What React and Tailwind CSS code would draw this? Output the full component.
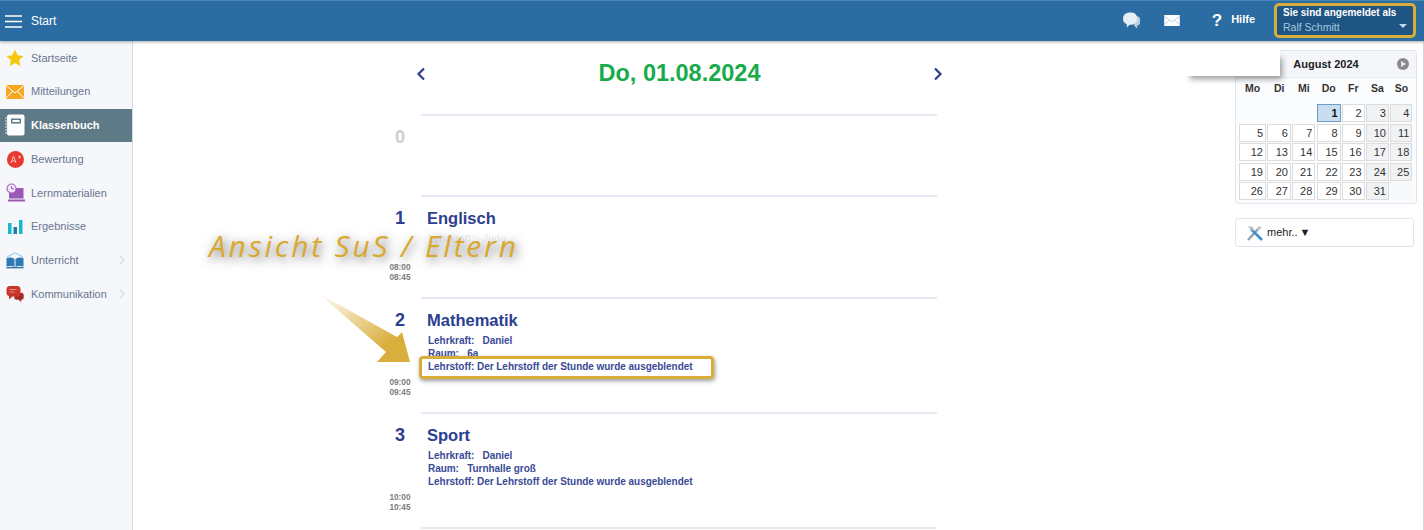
const navy = "text-[#2c3e8f]";

const StarIcon = () => (
    <svg width="18" height="18" viewBox="0 0 18 18"><polygon points="9,0.5 11.6,6.2 17.6,6.9 13.1,11 14.4,17.2 9,14 3.6,17.2 4.9,11 0.4,6.9 6.4,6.2" fill="#f6c70f" /></svg>
);
const MailIcon = () => (
    <svg width="18" height="14" viewBox="0 0 18 14"><rect width="18" height="14" fill="#f5a623" /><path d="M0 .5 9 8l9-7.5M0 13.5 6.5 6M18 13.5 11.5 6" fill="none" stroke="#fff" strokeWidth="1" /></svg>
);
const BookIcon = () => (
    <svg width="20" height="22" viewBox="0 0 20 22"><rect x="2" y="0.5" width="17.5" height="21" rx="2" fill="#fff" /><rect x="6" y="4.5" width="10" height="5" fill="#5f7a87" /><rect x="7.5" y="6" width="7" height="2" fill="#fff" /><path d="M0 4h3M0 7h3M0 10h3M0 13h3M0 16h3M0 19h3" stroke="#dfe5e8" strokeWidth="1" /></svg>
);
const GradeIcon = () => (
    <svg width="17" height="17" viewBox="0 0 17 17"><circle cx="8.5" cy="8.5" r="8.5" fill="#e8392f" /><path d="M4 12 6.5 5 9 12M5 10h3" fill="none" stroke="#f7c5c0" strokeWidth="1" /><path d="M11 6h3M12.5 4.500v3" stroke="#f7c5c0" strokeWidth="1" /></svg>
);
const LaptopIcon = () => (
    <svg width="19" height="19" viewBox="0 0 19 19"><rect x="3" y="5" width="14.500" height="10.500" fill="#9b59b6" /><path d="M2 16.500h17V18.500H2z" fill="#9b59b6" /><circle cx="5.500" cy="5.500" r="4.500" fill="#f3e8f8" stroke="#a56cc1" strokeWidth="1.200" /><path d="M5.500 3v2.800H8" fill="none" stroke="#9b59b6" strokeWidth="1" /></svg>
);
const BarsIcon = () => (
    <svg width="15" height="14" viewBox="0 0 15 14"><rect x="0" y="3" width="3.500" height="11" fill="#17b8c8" /><rect x="5.500" y="7" width="3.500" height="7" fill="#1f7fa6" /><rect x="11" y="0" width="3.500" height="14" fill="#17b8c8" /></svg>
);
const LessonIcon = () => (
    <svg width="18" height="17" viewBox="0 0 18 17"><path d="M1 5 9 .8 17 5" fill="none" stroke="#8fc0e3" strokeWidth="1" /><path d="M.5 6C4 5 7 5.500 8.500 7v8C7 14 4 13.500.5 14.500zM17.500 6C14 5 11 5.500 9.500 7v8c1.500-1 4.500-1.500 8-.5z" fill="#2c7bb5" /><path d="M.5 15.700h17" stroke="#1d5f8f" strokeWidth="1.200" /></svg>
);
const TalkIcon = () => (
    <svg width="18" height="17" viewBox="0 0 18 17"><path d="M8 6.500h7.500a2.500 2.500 0 0 1 2.500 2.500v2.500A2.500 2.500 0 0 1 15.500 14v2.800L12.500 14H10.500A2.500 2.500 0 0 1 8 11.500z" fill="#a32c22" stroke="#fff" strokeWidth="0.600" /><path d="M4 0h7a3.500 3.500 0 0 1 3.500 3.500v3.500A3.500 3.500 0 0 1 11 10.500H6.500L3 13.500v-3.200A3.500 3.500 0 0 1 .5 7V3.500A3.500 3.500 0 0 1 4 0z" fill="#c9352b" /><path d="M3.500 3.500h7M3.500 6h5" stroke="#e88f88" strokeWidth="1" /></svg>
);
const Chevron = ({ open }) => (
    <svg width="6" height="10" viewBox="0 0 6 10" className={open ? "" : "invisible"}><path d="M1 1l4 4-4 4" fill="none" stroke="#d5d9de" strokeWidth="1.200" /></svg>
);

const navItems = [
    { label: "Startseite", icon: <StarIcon /> },
    { label: "Mitteilungen", icon: <MailIcon /> },
    { label: "Klassenbuch", icon: <BookIcon />, active: true },
    { label: "Bewertung", icon: <GradeIcon /> },
    { label: "Lernmaterialien", icon: <LaptopIcon /> },
    { label: "Ergebnisse", icon: <BarsIcon /> },
    { label: "Unterricht", icon: <LessonIcon />, more: true },
    { label: "Kommunikation", icon: <TalkIcon />, more: true },
];

const hidden = "Der Lehrstoff der Stunde wurde ausgeblendet";
const lessons = [
    { nr: "0", h: "h-[81px]", muted: true },
    { nr: "1", h: "h-[102px]", title: "Englisch", from: "08:00", to: "08:45", faded: true },
    { nr: "2", h: "h-[115px]", title: "Mathematik", from: "09:00", to: "09:45", room: "6a", marked: true },
    { nr: "3", h: "h-[115px]", title: "Sport", from: "10:00", to: "10:45", room: "Turnhalle groß" },
];

// 1. August is a Thursday
const days = [null, null, null, ...Array.from({ length: 31 }, (_, i) => i + 1)];
const weekdays = ["Mo", "Di", "Mi", "Do", "Fr", "Sa", "So"];

const Sidebar = () => (
    <aside className="w-[133px] shrink-0 bg-[#f5f7fa] border-r border-[#d8dde3]">
        {navItems.map(item => (
            <div
                key={item.label}
                className={`h-[33.75px] flex items-center pr-[7px] text-[11px] ${item.active ? "bg-[#5f7a87] text-white font-bold" : "text-[#6a7590]"}`}
            >
                <span className="w-[31px] shrink-0 flex justify-center pl-[1px] pr-[2px]">{item.icon}</span>
                <span className="flex-1">{item.label}</span>
                <Chevron open={item.more} />
            </div>
        ))}
    </aside>
);

const Lesson = ({ lesson }) => (
    <div className={`flex ${lesson.h}`}>
        <div className="w-[24px] shrink-0 mr-[9px] flex flex-col items-center justify-between pt-[12px] pb-[15px]">
            <span className={`text-[18px] leading-[22px] font-bold ${lesson.muted ? "text-[#cfcfcf]" : navy}`}>{lesson.nr}</span>
            {lesson.from && (
                <span className="text-[8.300px] leading-[10px] font-bold text-[#7d7d7d] text-center">
                    {lesson.from}<br />{lesson.to}
                </span>
            )}
        </div>
        <div className="flex-1 border-t-2 border-[#e4e9f3] pl-[6px] pt-[9.500px]">
            {lesson.title && <h3 className={`text-[16.500px] leading-[22px] font-bold ${navy}`}>{lesson.title}</h3>}
            {lesson.room && (
                <div className="pl-[1px] pt-[3px] text-[10px] tracking-[-0.04px] leading-[13.300px] font-bold text-[#3a4a97] whitespace-pre">
                    <div>Lehrkraft:   Daniel</div>
                    <div>Raum:   {lesson.room}</div>
                    <div>Lehrstoff: {hidden}</div>
                </div>
            )}
            {lesson.faded && (
                <div className="pl-[1px] pt-[3px] text-[10px] tracking-[-0.04px] leading-[13.300px] font-bold text-[#3a4a97]/10 whitespace-pre">Lehrkraft:   Judo</div>
            )}
        </div>
    </div>
);

const Calendar = () => (
    <div className="w-[182px] h-[154px] border border-[#dfe6f0] rounded-[3px] bg-[#fbfcfe]">
        <div className="h-[27px] relative flex items-center justify-center bg-[#f4f6f9] border-b border-[#e4ecf5] text-[11px] font-bold text-[#222]">
            August 2024
            <span className="absolute right-[7px] top-[7px] w-[12px] h-[12px] rounded-full bg-[#8a8a8a] flex items-center justify-center">
                <span className="w-0 h-0 border-y-[3.500px] border-y-transparent border-l-[5px] border-l-[#e8e8e8] ml-[1px]" />
            </span>
        </div>
        <div className="pl-[3px]">
            <div className="grid grid-cols-[27px_23.500px_23px_24px_22.500px_23px_22px] gap-x-[1.400px] h-[22px] mb-[4px] items-center text-center text-[10.500px] font-bold text-[#333]">
                {weekdays.map(d => <span key={d}>{d}</span>)}
            </div>
            <div className="grid grid-cols-[27px_23.500px_23px_24px_22.500px_23px_22px] gap-x-[1.400px] gap-y-[1.500px] auto-rows-[18px] text-[11px] leading-[16px] text-right text-[#333]">
                {days.map((d, i) => {
                    if (!d) return <span key={i} />;
                    const weekend = i % 7 > 4;
                    const today = d === 1;
                    return (
                        <span
                            key={i}
                            className={`border pr-[2px] ${today ? "bg-[#c9dcf0] border-[#6d9ec5] font-bold text-[#111]" : weekend ? "bg-[#f1f2f4] border-[#dcdcdc]" : "bg-white border-[#dcdcdc]"}`}
                        >
                            {d}
                        </span>
                    );
                })}
                <span className="bg-[#f7f8fa]" />
            </div>
        </div>
    </div>
);

export default function App() {
    return (
        <div className="relative w-[1424px] h-[530px] overflow-hidden bg-white font-['Liberation_Sans',Arial,sans-serif]">
            <header className="relative z-10 h-[41px] bg-[#2b6ca3] border-t border-[#4a85b5] shadow-[0_1px_3px_rgba(0,0,0,0.35)] flex items-center text-white">
                <svg width="17" height="13" viewBox="0 0 17 13" className="ml-[5px]"><path d="M0 1h17M0 6.500h17M0 12h17" stroke="#fff" strokeWidth="1.600" /></svg>
                <span className="ml-[9px] mb-[1px] text-[12px]">Start</span>
                <div className="flex-1" />
                <svg width="17" height="17" viewBox="0 0 18 17" className="mr-[23px] mb-[2px]">
                    <path d="M11 4h3.500A3.500 3.500 0 0 1 18 7.500v3a3.500 3.500 0 0 1-3 3.400V17l-3-3z" fill="#b9d0e3" />
                    <path d="M6.500 0h3A6 6 0 0 1 15 6v1a6 6 0 0 1-6 6H7l-3 3v-3.600A6 6 0 0 1 0 7V6a6.500 6 0 0 1 6.500-6z" fill="#e6eff6" />
                </svg>
                <svg width="18" height="11" viewBox="0 0 17 12" className="mr-[31px] mb-[1px]">
                    <rect width="17" height="12" fill="#fff" />
                    <path d="M0 1.500l8.500 6 8.500-6M0 11l5-5M17 11l-5-5" fill="none" stroke="#9cc0da" strokeWidth="0.800" />
                </svg>
                <span className="text-[17px] font-bold mr-[9px]">?</span>
                <span className="text-[11px] font-bold mr-[19px] mb-[3px]">Hilfe</span>
                <div className="self-start mt-[2px] w-[142px] h-[35px] mr-[8px] rounded-[5px] border-[3px] border-[#d8ad3a] bg-[#1f5583] pl-[6px] pr-[5px] relative">
                    <div className="text-[10px] leading-[14px] font-bold">Sie sind angemeldet als</div>
                    <div className="text-[10.500px] leading-[14px] text-[#a9c7de]">Ralf Schmitt</div>
                    <span className="absolute right-[6px] bottom-[7px] w-0 h-0 border-x-[4px] border-x-transparent border-t-[4px] border-t-[#c5d8e8]" />
                </div>
            </header>

            <div className="flex h-[489px]">
                <Sidebar />
                <main className="flex-1 flex border-r border-[#d5d5d5]">
                    <div className="w-[549px] ml-[255px]">
                        <div className="h-[73px] flex items-center pl-[28px] pb-[7px]">
                            <svg width="10" height="14" viewBox="0 0 10 14"><path d="M8 1.500 2.500 7 8 12.500" fill="none" stroke="#2c3e8f" strokeWidth="2.200" /></svg>
                            <h1 className="flex-1 text-center text-[23.500px] font-bold text-[#18ab4b]">Do, 01.08.2024</h1>
                            <svg width="10" height="14" viewBox="0 0 10 14" className="-mr-[6px]"><path d="M2 1.500 7.500 7 2 12.500" fill="none" stroke="#2c3e8f" strokeWidth="2.200" /></svg>
                        </div>
                        {lessons.map(l => <Lesson key={l.nr} lesson={l} />)}
                        <div className="ml-[33px] border-t-2 border-[#e4e9f3]" />
                    </div>
                    <div className="ml-[298px] pt-[9px]">
                        <Calendar />
                        <div className="mt-[14px] w-[179px] h-[29px] border border-[#dfe6f0] rounded-[3px] flex items-center pl-[11px] text-[11px] text-[#222]">
                            <svg width="16" height="16" viewBox="0 0 16 16">
                                <path d="M1 15 12 3" stroke="#9aa0a6" strokeWidth="2.500" />
                                <path d="M15 15 4 4" stroke="#3b8fd0" strokeWidth="2.500" />
                                <path d="M1 1l5 1 1 4-3-1z" fill="#b5bbc0" />
                                <path d="M11 1l4 1-2 3-3-1z" fill="#c9cdd1" />
                            </svg>
                            <span className="ml-[4px]">mehr..</span>
                            <span className="ml-[2px]">▼</span>
                        </div>
                    </div>
                </main>
            </div>

            {/* white patch left over by the screenshot editor */}
            <div className="absolute left-[1180px] top-[47px] w-[100px] h-[29px] bg-white shadow-[6px_7px_6px_-4px_rgba(0,0,0,0.4)]" />

            {/* annotations on top of the page */}
            <div className="absolute left-[209px] top-[227px] text-[30px] leading-[38px] italic tracking-[2.800px] font-['Open_Sans',sans-serif] font-normal text-[#d9a92f] whitespace-nowrap [text-shadow:2px_3px_9px_rgba(0,0,0,0.4),2px_3px_16px_rgba(0,0,0,0.3)]">
                Ansicht SuS / Eltern
            </div>
            <svg width="100" height="76" viewBox="0 0 100 76" className="absolute left-[315px] top-[290px]">
                <defs>
                    <linearGradient id="arrowFill" x1="0" y1="0" x2="1" y2="1">
                        <stop offset="0" stopColor="#d9ae3c" stopOpacity="0" />
                        <stop offset="0.75" stopColor="#d9ae3c" />
                    </linearGradient>
                </defs>
                <polygon points="3,3 82,47 87,42 95,72 62,72 71,62" fill="url(#arrowFill)" />
            </svg>
            <div className="absolute left-[419px] top-[356px] w-[295px] h-[23px] rounded-[4px] border-[3px] border-[#d8ad3a] shadow-[1px_2px_4px_rgba(0,0,0,0.4)]" />
        </div>
    );
}
